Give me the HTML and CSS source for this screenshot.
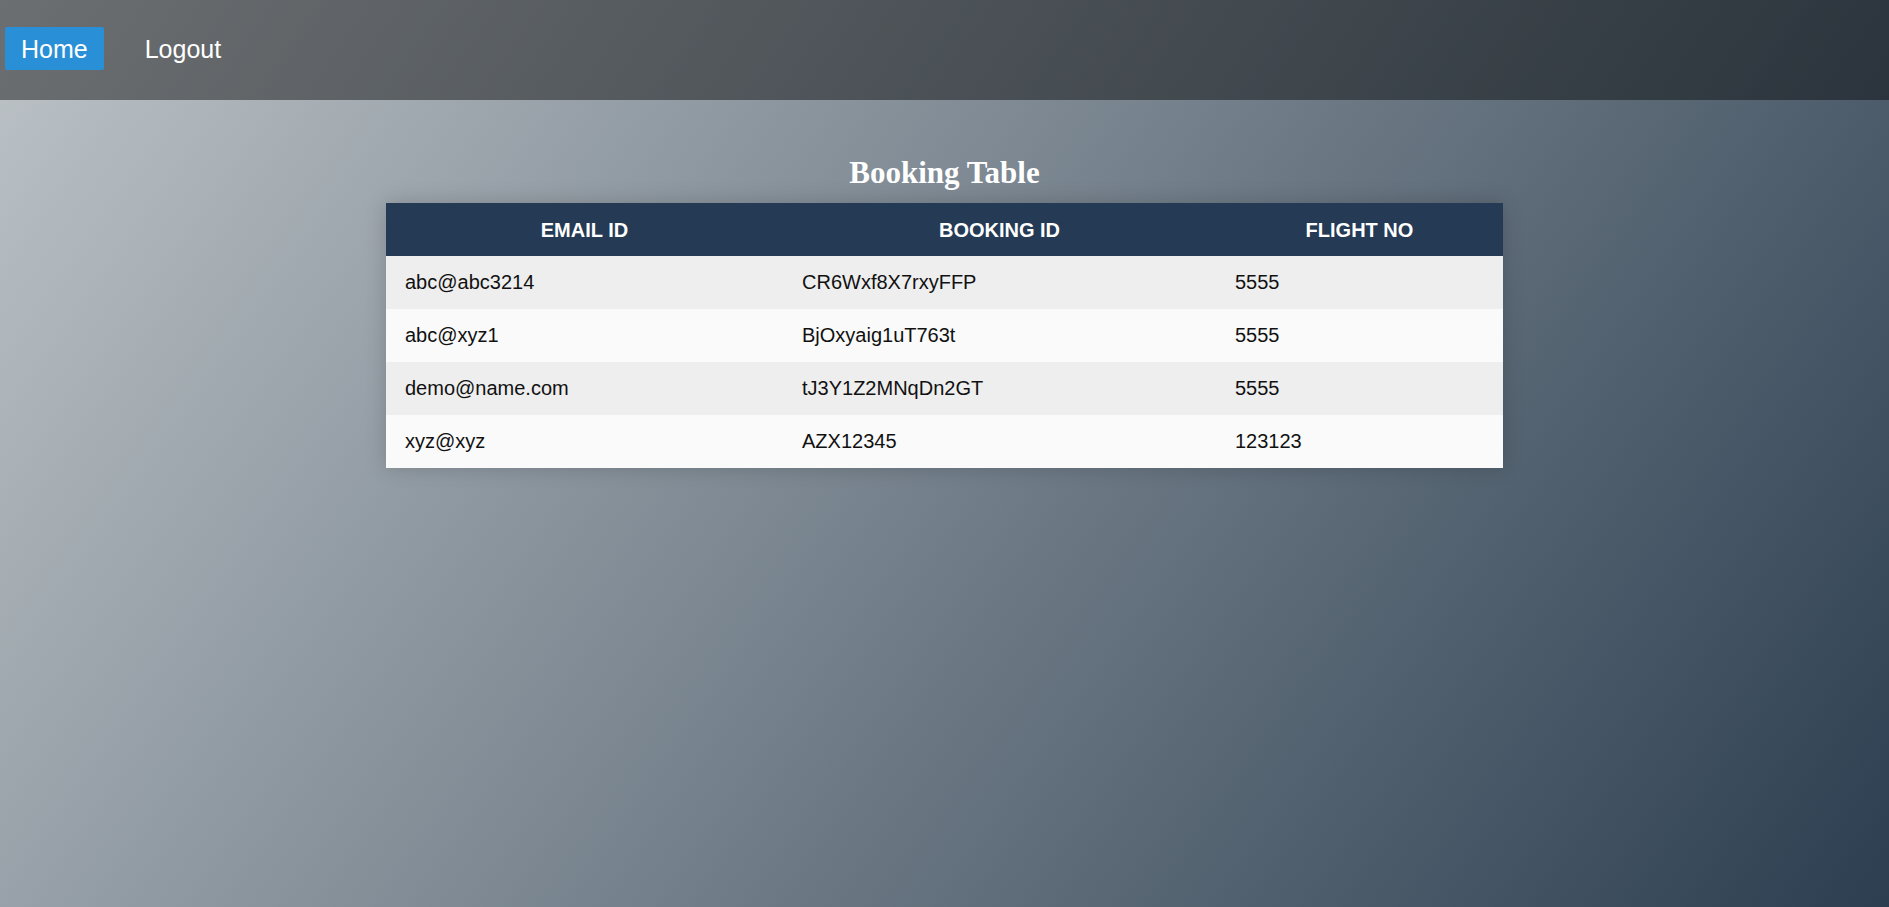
FILE: index.html
```html
<!DOCTYPE html>
<html lang="en">
<head>
<meta charset="utf-8">
<title>Booking Table</title>
<link rel="stylesheet" href="styles.css">
</head>
<body>
<header class="topbar">
  <nav class="nav">
    <a class="nav-link active" href="#">Home</a>
    <a class="nav-link" href="#">Logout</a>
  </nav>
</header>
<main class="content">
  <h2 class="title">Booking Table</h2>
  <table class="bookings">
    <colgroup>
      <col class="col-email">
      <col class="col-booking">
      <col class="col-flight">
    </colgroup>
    <thead>
      <tr><th>Email ID</th><th>Booking ID</th><th>Flight No</th></tr>
    </thead>
    <tbody>
      <tr><td>abc@abc3214</td><td>CR6Wxf8X7rxyFFP</td><td>5555</td></tr>
      <tr><td>abc@xyz1</td><td>BjOxyaig1uT763t</td><td>5555</td></tr>
      <tr><td>demo@name.com</td><td>tJ3Y1Z2MNqDn2GT</td><td>5555</td></tr>
      <tr><td>xyz@xyz</td><td>AZX12345</td><td>123123</td></tr>
    </tbody>
  </table>
</main>
</body>
</html>
```

FILE: styles.css
```css
html, body {
  margin: 0;
  padding: 0;
}

body {
  min-height: 100vh;
  background: linear-gradient(125deg, #bdc3c7, #2c3e50);
  font-family: "Liberation Sans", Arial, sans-serif;
  color: #111;
}

.topbar {
  height: 100px;
  box-sizing: border-box;
  padding: 27px 0 0 5px;
  background: rgba(0, 0, 0, 0.43);
}

.nav {
  display: flex;
  gap: 25px;
}

.nav-link {
  display: block;
  padding: 8px 16px 6px;
  font-size: 25px;
  line-height: 29px;
  color: #fff;
  text-decoration: none;
  border-radius: 2px;
}

.nav-link.active {
  background: #2990d8;
}

.content {
  padding-top: 55px;
}

.title {
  margin: 0 0 13px;
  text-align: center;
  font-family: "Liberation Serif", "Times New Roman", serif;
  font-weight: bold;
  font-size: 31px;
  line-height: 35px;
  color: #fff;
}

.bookings {
  width: 1117px;
  margin: 0 auto;
  border-collapse: collapse;
  table-layout: fixed;
  box-shadow: 0 0 20px rgba(0, 0, 0, 0.18);
  font-size: 20px;
}

.col-email { width: 397px; }
.col-booking { width: 433px; }
.col-flight { width: 287px; }

.bookings th {
  background: #243a55;
  color: #fff;
  font-weight: bold;
  text-transform: uppercase;
  text-align: center;
  padding: 16px 20px 14px;
  line-height: 23px;
}

.bookings td {
  padding: 15px 19px;
  line-height: 23px;
  text-align: left;
  color: #111;
}

.bookings tbody tr:nth-child(odd) td {
  background: #eeeeee;
}

.bookings tbody tr:nth-child(even) td {
  background: #fafafa;
}
```
